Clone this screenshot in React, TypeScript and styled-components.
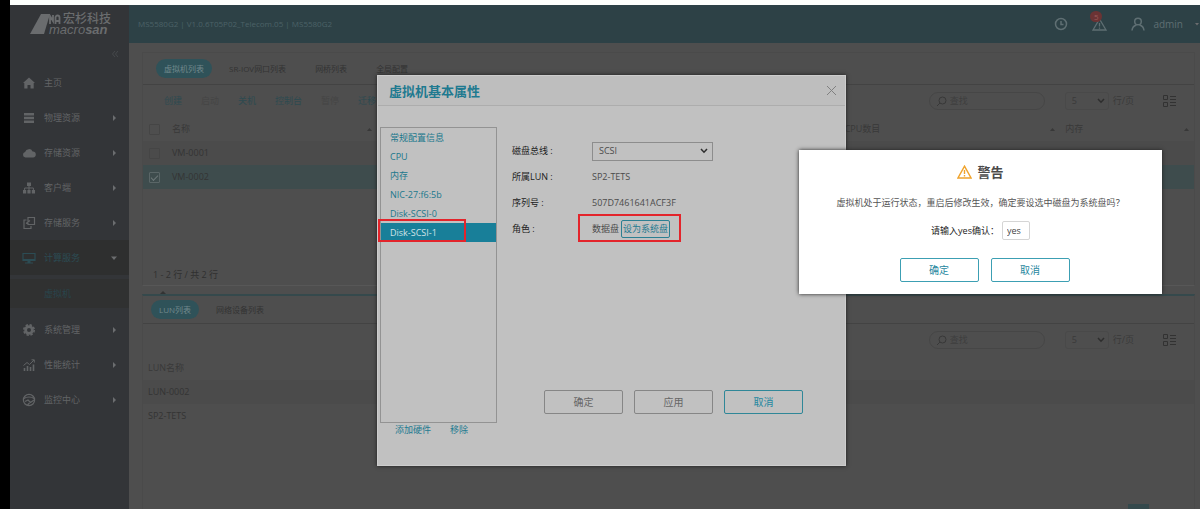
import React from "react";
import styled, { createGlobalStyle, css } from "styled-components";

const Global = createGlobalStyle`
  * { box-sizing: border-box; }
  body {
    margin: 0;
    background: #000;
    font-family: "Open Sans", "Noto Sans CJK SC", sans-serif;
    font-size: 9px;
    line-height: 12px;
    color: #343434;
  }
  button, input, select { font: inherit; color: inherit; margin: 0; }
  a { color: inherit; text-decoration: none; }
`;

const Page = styled.div`
  position: relative;
  display: flex;
  flex-direction: column;
  min-height: 100vh;
  margin-left: 10px;
  border-top: 5px solid #fdfffc;
  overflow: hidden;
`;
const Shell = styled.div`
  display: flex;
  flex: 1;
`;

/* Sidebar */
const Sidebar = styled.nav`
  flex: 0 0 119px;
  background: #333538;
  color: #626466;
`;
const LogoBar = styled.div`
  display: flex;
  align-items: center;
  height: 38px;
  padding: 0 0 0 20px;
`;
const LogoText = styled.div`
  display: flex;
  flex-direction: column;
  margin-left: -4px;
  color: #6a6c6e;
`;
const LogoTop = styled.div`
  display: flex;
  align-items: center;
  gap: 2px;
  font-size: 12px;
  line-height: 12px;
  font-weight: 500;
  white-space: nowrap;
`;
const LogoName = styled.div`
  font-family: "Liberation Sans", sans-serif;
  font-size: 13px;
  line-height: 10px;
  font-style: italic;
  font-weight: 400;
  b { font-weight: 700; }
`;
const Collapse = styled.button`
  display: flex;
  align-items: center;
  justify-content: flex-end;
  width: 100%;
  height: 22px;
  padding: 0 11px;
  border: 0;
  background: none;
  color: #46494c;
`;
const NavItem = styled.a<{ $active?: boolean }>`
  display: grid;
  grid-template-columns: 14px 1fr 8px;
  align-items: center;
  column-gap: 8px;
  height: 35px;
  padding: 0 10px 0 12px;
  ${(p) => p.$active && css`background: #2e2f2f; color: #2c4c54;`}
  svg:first-child { justify-self: center; }
`;
const SubItem = styled.a`
  display: flex;
  align-items: center;
  height: 29px;
  margin: 4px 0;
  padding-left: 34px;
  background: #303131;
  color: #29454c;
`;
const Caret = styled.svg`
  width: 6px;
  height: 6px;
  fill: #6b6d6f;
`;

/* Main area */
const Main = styled.div`
  display: flex;
  flex: 1;
  flex-direction: column;
  min-width: 0;
  background: #4e4e4e;
`;
const Header = styled.header`
  display: flex;
  align-items: center;
  height: 38px;
  padding: 0 0 0 9px;
  background: #2d4146;
  color: #4c6166;
`;
const Version = styled.span`
  flex: 1;
  font-size: 8px;
`;
const HeaderTool = styled.button`
  position: relative;
  display: flex;
  align-items: center;
  gap: 8px;
  padding: 0;
  margin-right: 24px;
  border: 0;
  background: none;
  color: #5f6f73;
  font-size: 10px;
  &:last-child { margin-right: 0; }
  ${Caret} { margin-left: 3px; }
`;
const Badge = styled.span`
  position: absolute;
  top: -6px;
  left: -2px;
  width: 12px;
  height: 11px;
  border-radius: 6px;
  background: #6b3334;
  color: #9a5a5a;
  font-size: 8px;
  line-height: 11px;
  text-align: center;
`;
const Content = styled.main`
  display: flex;
  flex: 1;
  flex-direction: column;
  padding: 9px 5px 0 13px;
`;
const Panel = styled.section`
  border: 1px solid #4a4a4a;
  border-bottom-color: #575757;
`;
const TopPanel = styled(Panel)`
  display: flex;
  flex-direction: column;
`;
const BottomPanel = styled(Panel)`
  flex: 1;
  border-top: 2px solid #35494c;
  border-bottom: 0;
`;
const Splitter = styled.div`
  display: flex;
  align-items: flex-end;
  height: 8px;
  padding-left: 18px;
`;
const Tabs = styled.div<{ $compact?: boolean }>`
  display: flex;
  align-items: center;
  gap: 5px;
  height: ${(p) => (p.$compact ? 28 : 32)}px;
  padding-left: ${(p) => (p.$compact ? 8 : 13)}px;
  border-bottom: 1px solid #434343;
`;
const Tab = styled.button<{ $on?: boolean }>`
  height: 19px;
  padding: 0 ${(p) => (p.$on ? 8 : 12)}px;
  border: 0;
  border-radius: 10px;
  background: ${(p) => (p.$on ? "#2f5259" : "none")};
  color: ${(p) => (p.$on ? "#71898d" : "#333")};
  font-size: 8px;
  white-space: nowrap;
`;
const Toolbar = styled.div`
  display: flex;
  align-items: center;
  height: 32px;
  padding: 0 18px 0 21px;
`;
const Action = styled.button<{ $off?: boolean }>`
  padding: 0;
  margin-right: 19px;
  border: 0;
  background: none;
  color: ${(p) => (p.$off ? "#454545" : "#2d4a50")};
`;
const Search = styled.label`
  display: flex;
  align-items: center;
  gap: 3px;
  width: 116px;
  height: 18px;
  margin-left: auto;
  padding: 0 6px;
  border: 1px solid #464646;
  border-radius: 9px;
  color: #383838;
  input {
    width: 80px;
    padding: 0;
    border: 0;
    outline: 0;
    background: none;
  }
  input::placeholder { color: #3e3e3e; opacity: 1; }
`;
const SelectBox = styled.span<{ $wide?: boolean }>`
  display: flex;
  align-items: center;
  width: ${(p) => (p.$wide ? 121 : 44)}px;
  height: ${(p) => (p.$wide ? 19 : 18)}px;
  padding-right: ${(p) => (p.$wide ? 4 : 3)}px;
  border: 1px solid ${(p) => (p.$wide ? "#8d8d8d" : "#494949")};
  border-radius: ${(p) => (p.$wide ? 0 : 3)}px;
  select {
    flex: 1;
    min-width: 0;
    padding: 0 0 0 6px;
    border: 0;
    outline: 0;
    appearance: none;
    background: none;
  }
`;
const PageSize = styled.label`
  display: flex;
  align-items: center;
  gap: 4px;
  margin: 0 29px 0 20px;
  color: #3a3a3a;
`;
const ViewButton = styled.button`
  display: flex;
  padding: 0;
  border: 0;
  background: none;
  color: #323232;
`;
const Table = styled.table`
  width: 100%;
  border-collapse: collapse;
  table-layout: fixed;
  th, td {
    height: 24px;
    padding: 0 5px;
    font-weight: 400;
    text-align: left;
    white-space: nowrap;
  }
  thead th { color: #393939; }
`;
const Row = styled.tr<{ $tone?: "stripe" | "picked" }>`
  background: ${(p) => (p.$tone === "picked" ? "#3e4c4d" : p.$tone === "stripe" ? "#4b4b4b" : "none")};
`;
const HeadCell = styled.div`
  display: flex;
  align-items: center;
  justify-content: space-between;
`;
const Check = styled.input`
  display: grid;
  place-items: center;
  appearance: none;
  width: 11px;
  height: 11px;
  margin: 0 0 0 1px;
  border: 1px solid #454545;
  border-radius: 1px;
  &:checked { border-color: #5a6667; }
  &:checked::after {
    content: "";
    width: 6px;
    height: 3px;
    border: solid #6c7778;
    border-width: 0 0 1px 1px;
    transform: rotate(-45deg);
  }
`;
const Count = styled.div`
  padding: 80px 0 4px 10px;
  color: #303030;
`;
const Spacer = styled.div`
  flex: 1;
`;
const Pager = styled.div`
  position: absolute;
  right: 51px;
  bottom: 0;
  width: 21px;
  height: 5px;
  background: #35494c;
`;

/* Properties dialog */
const Dialog = styled.section`
  position: absolute;
  top: 70px;
  left: 367px;
  width: 469px;
  background: #c1c1c1;
  border: 1px solid #cdcdcd;
  box-shadow: 0 0 4px #1e1e1e;
`;
const DialogHead = styled.div`
  display: flex;
  align-items: center;
  justify-content: space-between;
  height: 30px;
  padding: 0 8px 0 11px;
  border-bottom: 1px solid #adadad;
  background: #bebebe;
  h2 {
    margin: 0;
    font-size: 13px;
    line-height: 18px;
    font-weight: 700;
    color: #1f7a90;
  }
`;
const CloseButton = styled.button`
  display: flex;
  padding: 0;
  border: 0;
  background: none;
  color: #808080;
`;
const DialogBody = styled.div`
  display: flex;
  padding: 21px 0 29px 2px;
`;
const Side = styled.div`
  width: 117px;
`;
const HardwareList = styled.ul`
  height: 296px;
  margin: 0;
  padding: 0;
  border: 1px solid #939393;
  list-style: none;
`;
const HardwareItem = styled.button<{ $on?: boolean }>`
  display: block;
  width: 100%;
  height: 19px;
  padding: 0 9px;
  border: 0;
  background: ${(p) => (p.$on ? "#187f99" : "none")};
  color: ${(p) => (p.$on ? "#d3e3e7" : "#20788c")};
  text-align: left;
`;
const SideLinks = styled.div`
  display: flex;
  gap: 19px;
  padding: 1px 0 0 15px;
  button {
    padding: 0;
    border: 0;
    background: none;
    color: #1f7a90;
  }
`;
const Detail = styled.div`
  display: flex;
  flex: 1;
  flex-direction: column;
  padding: 11px 0 0 15px;
`;
const Fields = styled.div`
  display: grid;
  grid-template-columns: 80px 1fr;
  grid-auto-rows: 26px;
  align-items: center;
  color: #4b4b4b;
`;
const FieldLabel = styled.label`
  color: #222;
`;
const RoleValue = styled.div`
  display: flex;
  align-items: center;
  gap: 2px;
`;
const RoleButton = styled.button`
  height: 18px;
  padding: 0 1px;
  border: 1px solid #2b7f92;
  border-radius: 2px;
  background: none;
  color: #1f7a90;
`;
const Buttons = styled.div<{ $center?: boolean }>`
  display: flex;
  gap: ${(p) => (p.$center ? 12 : 11)}px;
  ${(p) => (p.$center ? css`padding-left: 8px; justify-content: center;` : css`padding: 148px 0 0 32px;`)}
`;
const Button = styled.button<{ $tone?: "muted" | "teal" | "light" }>`
  width: 79px;
  height: 24px;
  padding: 0;
  border: 1px solid ${(p) => (p.$tone === "muted" ? "#868686" : p.$tone === "light" ? "#3c9fb3" : "#2f8798")};
  border-radius: 2px;
  background: none;
  color: ${(p) => (p.$tone === "muted" ? "#666" : "#1f87a0")};
  font-size: 10px;
`;

/* Red outlines drawn over the dialog */
const Mark = styled.span<{ $x: number; $y: number; $w: number; $h: number }>`
  position: absolute;
  left: ${(p) => p.$x}px;
  top: ${(p) => p.$y}px;
  width: ${(p) => p.$w}px;
  height: ${(p) => p.$h}px;
  border: 2px solid #e3242b;
  pointer-events: none;
`;

/* Warning dialog */
const Warning = styled.section`
  position: absolute;
  top: 145px;
  left: 789px;
  width: 363px;
  padding: 12px 0;
  background: #fff;
  box-shadow: 0 0 4px #222;
  text-align: center;
`;
const WarningTitle = styled.h2`
  display: flex;
  align-items: center;
  justify-content: center;
  gap: 5px;
  margin: 0;
  font-size: 13px;
  line-height: 20px;
  font-weight: 700;
  color: #4a4a4a;
`;
const WarningText = styled.p`
  margin: 15px 0 12px;
  color: #555;
  white-space: nowrap;
`;
const Confirm = styled.label`
  display: flex;
  align-items: center;
  justify-content: center;
  gap: 3px;
  margin-bottom: 18px;
  color: #222;
  input {
    width: 28px;
    height: 19px;
    padding: 0 4px;
    border: 1px solid #d5d5d5;
    border-radius: 2px;
    outline: 0;
    color: #444;
  }
`;

const Chevron = () => (
  <svg width="8" height="6" viewBox="0 0 8 6" fill="none" stroke="#2e2e2e" strokeWidth="1.5">
    <path d="M1 1l3 3.2L7 1" />
  </svg>
);

const navIcons: Record<string, React.ReactNode> = {
  home: <path d="M7 1.5L1 7h1.300v5.500h3.200V9h3v3.500h3.200V7H13z" fill="currentColor" />,
  rack: <path d="M2 2h10v2.600H2zM2 5.700h10v2.600H2zM2 9.400h10V12H2z" fill="currentColor" />,
  cloud: <path d="M3.500 11.500a2.800 2.800 0 0 1-.4-5.500A4 4 0 0 1 10.600 5.500 3 3 0 0 1 11 11.500z" fill="currentColor" />,
  client: (
    <g fill="currentColor">
      <path d="M5 1.500h4v3.500H5zM1 9h3.200v3.500H1zM5.400 9h3.200v3.500H5.400zM9.800 9H13v3.500H9.800z" />
      <path d="M7 4.500V9M2.600 9V7h8.800v2" fill="none" stroke="currentColor" />
    </g>
  ),
  service: (
    <g fill="none" stroke="currentColor" strokeWidth="1.200">
      <path d="M4.500 4H2v8.500h7V10M6 1.500h6.500v7H6zM4 7.500l4-3" />
    </g>
  ),
  compute: (
    <g>
      <path d="M1 2.500h12v7H1z" fill="none" stroke="currentColor" strokeWidth="1.200" />
      <path d="M1 8h12v2H8.500v1.500H11v1H3v-1h2.500V10H1z" fill="currentColor" />
    </g>
  ),
  gear: (
    <g fill="none" stroke="currentColor">
      <circle cx="7" cy="7" r="3.400" strokeWidth="2.800" />
      <circle cx="7" cy="7" r="5.200" strokeWidth="1.600" strokeDasharray="2.400 1.680" />
    </g>
  ),
  stats: (
    <g fill="none" stroke="currentColor">
      <path d="M1.500 7.500L5 4.500l2.500 2L12 2M9.500 1.800h2.800v2.800" />
      <path d="M2.500 10v3M5.500 8v5M8.500 9v4M11.500 6.500V13" strokeWidth="1.600" />
    </g>
  ),
  monitor: (
    <g fill="none" stroke="currentColor" strokeWidth="1.200">
      <circle cx="7" cy="7" r="5.600" />
      <path d="M2 5.500c2.500-2 7.500-2 10 0M3 8.500l3-1.500 2.500 2.500L12 7M5.500 12l2-2" />
    </g>
  ),
};

const NavIcon = ({ name }: { name: string }) => (
  <svg width="14" height="14" viewBox="0 0 14 14">{navIcons[name]}</svg>
);

const nav = [
  { icon: "home", label: "主页", leaf: true },
  { icon: "rack", label: "物理资源" },
  { icon: "cloud", label: "存储资源" },
  { icon: "client", label: "客户端" },
  { icon: "service", label: "存储服务" },
  { icon: "compute", label: "计算服务", active: true },
  { icon: "gear", label: "系统管理" },
  { icon: "stats", label: "性能统计" },
  { icon: "monitor", label: "监控中心" },
];

const hardware = ["常规配置信息", "CPU", "内存", "NIC-27:f6:5b", "Disk-SCSI-0", "Disk-SCSI-1"];

const ListTools = () => (
  <>
    <Search>
      <svg width="11" height="11" viewBox="0 0 11 11" fill="none" stroke="currentColor">
        <circle cx="6.500" cy="4.500" r="3.500" />
        <path d="M4 7L1 10" />
      </svg>
      <input type="text" placeholder="查找" aria-label="查找" />
    </Search>
    <PageSize>
      <SelectBox>
        <select defaultValue="5" aria-label="行/页"><option>5</option></select>
        <Chevron />
      </SelectBox>
      行/页
    </PageSize>
    <ViewButton aria-label="列">
      <svg width="13" height="12" viewBox="0 0 13 12" fill="none" stroke="currentColor">
        <path d="M.5.5h4v4h-4zM.5 7.500h4v4h-4zM7 1.500h6M7 4.500h6M7 7.500h6M7 10.500h6" />
      </svg>
    </ViewButton>
  </>
);

const Sort = () => (
  <svg width="5" height="5" viewBox="0 0 5 5" fill="#383838"><path d="M2.500 1L5 4H0z" /></svg>
);

export default function App() {
  return (
    <>
      <Global />
      <Page>
        <Shell>
          <Sidebar>
            <LogoBar>
              <svg width="23" height="23" viewBox="0 0 23 23" fill="#6a6c6e">
                <path d="M11 1h9L14 21H0z" />
              </svg>
              <LogoText>
                <LogoTop>
                  <svg width="12" height="10" viewBox="0 0 12 10" fill="none" stroke="currentColor" strokeWidth="1.800">
                    <path d="M1 10V2l3 5V1M6.500 10V3.500a2 2 0 0 1 4 0V10M6.500 7h4" />
                  </svg>
                  宏杉科技
                </LogoTop>
                <LogoName>macro<b>san</b></LogoName>
              </LogoText>
            </LogoBar>
            <Collapse aria-label="收起">
              <svg width="6" height="6" viewBox="0 0 6 6" fill="none" stroke="currentColor">
                <path d="M3 0L.5 3 3 6M6 0L3.500 3 6 6" />
              </svg>
            </Collapse>
            {nav.map((item) => (
              <React.Fragment key={item.label}>
                <NavItem href="#" $active={item.active}>
                  <NavIcon name={item.icon} />
                  <span>{item.label}</span>
                  {!item.leaf && (
                    <Caret viewBox="0 0 6 6">
                      <path d={item.active ? "M0 1.500h6L3 5z" : "M2 0l3 3-3 3z"} />
                    </Caret>
                  )}
                </NavItem>
                {item.active && <SubItem href="#">虚拟机</SubItem>}
              </React.Fragment>
            ))}
          </Sidebar>

          <Main>
            <Header>
              <Version>MS5580G2 | V1.0.6T05P02_Telecom.05 | MS5580G2</Version>
              <HeaderTool aria-label="时间">
                <svg width="14" height="14" viewBox="0 0 14 14" fill="none" stroke="currentColor" strokeWidth="1.500">
                  <circle cx="7" cy="7" r="5.500" />
                  <path d="M7 4v3.500h2.500" />
                </svg>
              </HeaderTool>
              <HeaderTool aria-label="告警">
                <svg width="15" height="14" viewBox="0 0 15 14" fill="none" stroke="currentColor" strokeWidth="1.300">
                  <path d="M7.500 2L14 13H1zM7.500 6v3.500M7.500 10.500v1.200" />
                </svg>
                <Badge>5</Badge>
              </HeaderTool>
              <HeaderTool>
                <svg width="14" height="14" viewBox="0 0 14 14" fill="none" stroke="currentColor" strokeWidth="1.500">
                  <circle cx="7" cy="4.500" r="3.300" />
                  <path d="M1 13.500c.3-3 2.500-5 4.500-5.500M13 13.500c-.3-3-2.500-5-4.500-5.500" />
                </svg>
                admin
                <Caret viewBox="0 0 6 6"><path d="M1 2h4L3 4.500z" /></Caret>
              </HeaderTool>
            </Header>

            <Content>
              <TopPanel>
                <Tabs>
                  <Tab $on>虚拟机列表</Tab>
                  <Tab>SR-IOV网口列表</Tab>
                  <Tab>网桥列表</Tab>
                  <Tab>全局配置</Tab>
                </Tabs>
                <Toolbar>
                  <Action>创建</Action>
                  <Action $off>启动</Action>
                  <Action>关机</Action>
                  <Action>控制台</Action>
                  <Action $off>暂停</Action>
                  <Action>迁移</Action>
                  <ListTools />
                </Toolbar>
                <Table>
                  <colgroup>
                    <col width="24" />
                    <col width="20%" />
                    <col width="44%" />
                    <col width="21%" />
                    <col />
                  </colgroup>
                  <thead>
                    <tr>
                      <th><Check type="checkbox" aria-label="全选" /></th>
                      <th><HeadCell>名称<Sort /></HeadCell></th>
                      <th />
                      <th><HeadCell>CPU数目<Sort /></HeadCell></th>
                      <th><HeadCell>内存<Sort /></HeadCell></th>
                    </tr>
                  </thead>
                  <tbody>
                    <Row $tone="stripe">
                      <td><Check type="checkbox" aria-label="VM-0001" /></td>
                      <td>VM-0001</td><td /><td /><td />
                    </Row>
                    <Row $tone="picked">
                      <td><Check type="checkbox" defaultChecked aria-label="VM-0002" /></td>
                      <td>VM-0002</td><td /><td /><td />
                    </Row>
                  </tbody>
                </Table>
                <Count>1 - 2 行 / 共 2 行</Count>
              </TopPanel>
              <Splitter>
                <svg width="6" height="3" viewBox="0 0 6 3" fill="#333"><path d="M3 0l3 3H0z" /></svg>
              </Splitter>
              <BottomPanel>
                <Tabs $compact>
                  <Tab $on>LUN列表</Tab>
                  <Tab>网络设备列表</Tab>
                </Tabs>
                <Toolbar>
                  <Spacer />
                  <ListTools />
                </Toolbar>
                <Table>
                  <thead>
                    <tr><th>LUN名称</th></tr>
                  </thead>
                  <tbody>
                    <Row $tone="stripe"><td>LUN-0002</td></Row>
                    <Row><td>SP2-TETS</td></Row>
                  </tbody>
                </Table>
              </BottomPanel>
            </Content>
          </Main>
        </Shell>
        <Pager />

        <Dialog role="dialog" aria-label="虚拟机基本属性">
          <DialogHead>
            <h2>虚拟机基本属性</h2>
            <CloseButton aria-label="关闭">
              <svg width="11" height="11" viewBox="0 0 11 11" fill="none" stroke="currentColor">
                <path d="M1 1l9 9M10 1l-9 9" />
              </svg>
            </CloseButton>
          </DialogHead>
          <DialogBody>
            <Side>
              <HardwareList>
                {hardware.map((name, i) => (
                  <li key={name}><HardwareItem $on={i === hardware.length - 1}>{name}</HardwareItem></li>
                ))}
              </HardwareList>
              <SideLinks>
                <button>添加硬件</button>
                <button>移除</button>
              </SideLinks>
            </Side>
            <Detail>
              <Fields>
                <FieldLabel htmlFor="bus">磁盘总线 :</FieldLabel>
                <SelectBox $wide>
                  <select id="bus" defaultValue="SCSI"><option>SCSI</option></select>
                  <Chevron />
                </SelectBox>
                <FieldLabel as="span">所属LUN :</FieldLabel>
                <span>SP2-TETS</span>
                <FieldLabel as="span">序列号 :</FieldLabel>
                <span>507D7461641ACF3F</span>
                <FieldLabel as="span">角色 :</FieldLabel>
                <RoleValue>数据盘<RoleButton>设为系统盘</RoleButton></RoleValue>
              </Fields>
              <Buttons>
                <Button $tone="muted">确定</Button>
                <Button $tone="muted">应用</Button>
                <Button $tone="teal">取消</Button>
              </Buttons>
            </Detail>
          </DialogBody>
          <Mark $x={0} $y={143} $w={88} $h={23} />
          <Mark $x={200} $y={138} $w={103} $h={28} />
        </Dialog>

        <Warning role="alertdialog" aria-label="警告">
          <WarningTitle>
            <svg width="15" height="14" viewBox="0 0 15 14" fill="none" stroke="#f0a32c" strokeWidth="1.400">
              <path d="M7.500 1.200L14 13H1zM7.500 5v4M7.500 10v1.400" />
            </svg>
            警告
          </WarningTitle>
          <WarningText>虚拟机处于运行状态，重启后修改生效，确定要设选中磁盘为系统盘吗？</WarningText>
          <Confirm>
            请输入yes确认：
            <input type="text" defaultValue="yes" />
          </Confirm>
          <Buttons $center>
            <Button $tone="light">确定</Button>
            <Button $tone="light">取消</Button>
          </Buttons>
        </Warning>
      </Page>
    </>
  );
}
